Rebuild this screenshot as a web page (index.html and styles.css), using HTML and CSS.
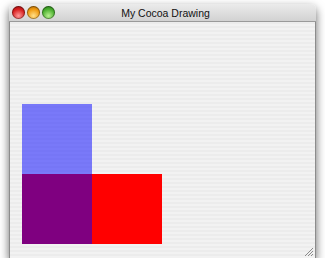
FILE: index.html
```html
<!DOCTYPE html>
<html lang="en">
<head>
  <meta charset="UTF-8">
  <title>My Cocoa Drawing</title>
  <link rel="stylesheet" href="styles.css">
</head>
<body>
  <div class="window">
    <div class="titlebar">
      <div class="lights">
        <span class="light red"></span>
        <span class="light yellow"></span>
        <span class="light green"></span>
      </div>
      <div class="title">My Cocoa Drawing</div>
    </div>
    <div class="content">
      <svg class="drawing" width="305" height="236" viewBox="0 0 305 236">
        <rect x="12" y="152" width="140" height="70" fill="#ff0000"/>
        <rect x="12" y="82" width="70" height="140" fill="rgba(0,0,255,0.5)"/>
      </svg>
      <svg class="grip" width="10" height="10" viewBox="0 0 10 10">
        <path d="M9 1 L1 9 M9 4 L4 9 M9 7 L7 9" stroke="#8a8a8a" stroke-width="1"/>
      </svg>
    </div>
  </div>
</body>
</html>
```

FILE: styles.css
```css
body {
  margin: 0;
  background-color: #ffffff;
  font-family: 'Liberation Sans', Arial, sans-serif;
}

.window {
  margin: 4px 0 0 9px;
  width: 307px;
  height: 254px;
  border-radius: 5px 5px 0 0;
  box-shadow: 0 4px 10px rgba(0, 0, 0, 0.6);
  display: flex;
  flex-direction: column;
  overflow: hidden;
}

.titlebar {
  height: 17px;
  flex: none;
  background: linear-gradient(#ebebeb, #d2d2d2);
  border-bottom: 1px solid #9a9a9a;
  position: relative;
  display: flex;
  align-items: center;
  justify-content: center;
}

.lights {
  position: absolute;
  left: 3px;
  top: 2px;
  display: flex;
  gap: 2px;
}

.light {
  width: 13px;
  height: 13px;
  border-radius: 50%;
  box-shadow: inset 0 0 0 1px rgba(0, 0, 0, 0.35);
}

.light.red {
  background: radial-gradient(circle at 50% 75%, #ff9a9a, #d82020 55%, #8a0808);
}

.light.yellow {
  background: radial-gradient(circle at 50% 75%, #ffe08a, #f09a10 55%, #9a5a00);
}

.light.green {
  background: radial-gradient(circle at 50% 75%, #b8f090, #4cb030 55%, #1d6a10);
}

.title {
  font-size: 10.5px;
  color: #111111;
  padding-left: 6px;
  padding-top: 1px;
}

.content {
  flex: 1;
  position: relative;
  border: 1px solid #8c8c8c;
  border-top: none;
  background-color: #ececec;
  background-image: repeating-linear-gradient(#ececec 0, #ececec 2px, #f2f2f2 2px, #f2f2f2 4px);
}

.drawing {
  display: block;
}

.grip {
  position: absolute;
  right: 1px;
  bottom: 1px;
}
```
